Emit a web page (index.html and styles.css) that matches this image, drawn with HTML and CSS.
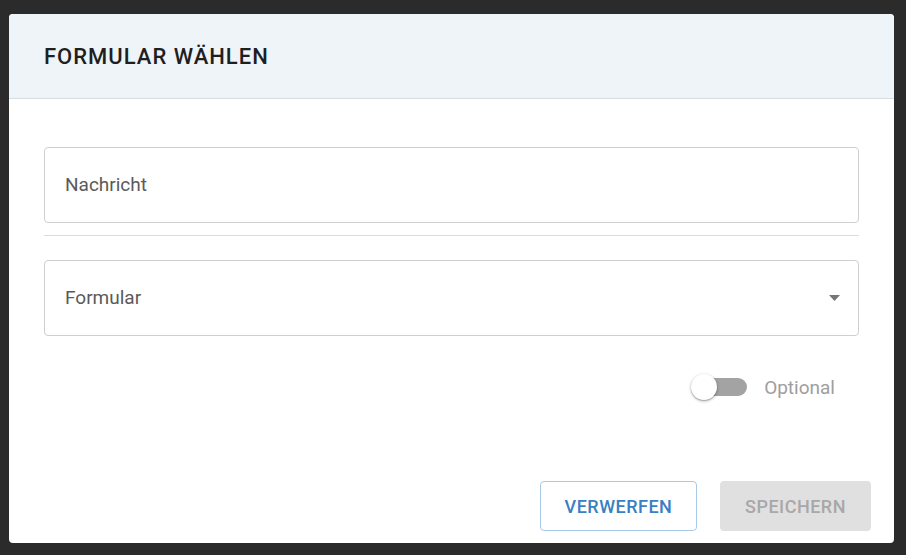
FILE: index.html
```html
<!DOCTYPE html>
<html lang="de">
<head>
<meta charset="utf-8">
<title>Formular wählen</title>
<link rel="stylesheet" href="styles.css">
</head>
<body>
<div class="backdrop">
  <div class="dialog">
    <div class="dialog-header">
      <h2 class="dialog-title">FORMULAR WÄHLEN</h2>
    </div>
    <div class="dialog-body">
      <div class="field">
        <span class="field-label">Nachricht</span>
      </div>
      <div class="divider"></div>
      <div class="field field-select">
        <span class="field-label">Formular</span>
        <svg class="select-arrow" width="11" height="6" viewBox="0 0 11 6"><path d="M0 0 L11 0 L5.5 6 Z" fill="#767676"/></svg>
      </div>
      <div class="toggle-row">
        <span class="switch">
          <span class="switch-track"></span>
          <span class="switch-thumb"></span>
        </span>
        <span class="toggle-label">Optional</span>
      </div>
    </div>
    <div class="dialog-footer">
      <button class="btn btn-outline">VERWERFEN</button>
      <button class="btn btn-disabled">SPEICHERN</button>
    </div>
  </div>
</div>
</body>
</html>
```
FILE: styles.css
```css
html, body {
  margin: 0;
  padding: 0;
  height: 100%;
}
body {
  background: #2b2b2b;
  font-family: Roboto, "Liberation Sans", sans-serif;
}
.backdrop {
  padding: 14px 12px 0 9px;
}
.dialog {
  width: 885px;
  height: 529px;
  background: #ffffff;
  border-radius: 4px;
  display: flex;
  flex-direction: column;
  overflow: hidden;
}
.dialog-header {
  height: 84px;
  background: #eef4f8;
  border-bottom: 1px solid #d6dee4;
  display: flex;
  align-items: center;
  padding: 0 35px;
  flex: none;
}
.dialog-title {
  margin: 0;
  font-size: 22px;
  font-weight: 500;
  color: #1f1f1f;
  letter-spacing: 1px;
}
.dialog-body {
  padding: 48px 35px 0;
  display: flex;
  flex-direction: column;
}
.field {
  height: 74px;
  border: 1px solid #cfcfcf;
  border-radius: 4px;
  display: flex;
  align-items: center;
  padding: 0 20px;
}
.field-label {
  font-size: 19px;
  color: #5a5a5a;
  margin-top: -2px;
}
.field-select {
  justify-content: space-between;
}
.select-arrow {
  display: block;
  margin-right: -2px;
}
.divider {
  height: 1px;
  background: #dcdcdc;
  margin: 12px 0 24px;
}
.toggle-row {
  display: flex;
  justify-content: flex-end;
  align-items: center;
  margin-top: 38px;
  padding-right: 24px;
  gap: 17px;
}
.switch {
  position: relative;
  width: 56px;
  height: 26px;
  display: block;
}
.switch-track {
  position: absolute;
  left: 4px;
  top: 4px;
  width: 52px;
  height: 18px;
  border-radius: 9px;
  background: #a3a3a3;
}
.switch-thumb {
  position: absolute;
  left: 0;
  top: 0;
  width: 26px;
  height: 26px;
  border-radius: 50%;
  background: #ffffff;
  box-shadow: 0 1px 3px rgba(0,0,0,0.35), 0 1px 1px rgba(0,0,0,0.14);
}
.toggle-label {
  font-size: 19px;
  color: #9e9e9e;
}
.dialog-footer {
  margin-top: auto;
  display: flex;
  justify-content: flex-end;
  gap: 23px;
  padding: 0 23px 12px 0;
}
.btn {
  height: 50px;
  border-radius: 4px;
  font-family: Roboto, "Liberation Sans", sans-serif;
  font-size: 18px;
  font-weight: 500;
  letter-spacing: 0.5px;
  padding: 0;
  cursor: pointer;
}
.btn-outline {
  width: 157px;
  background: #ffffff;
  border: 1px solid #a9c9e8;
  color: #3a7fc1;
}
.btn-disabled {
  width: 151px;
  background: #e0e0e0;
  border: none;
  color: #a8a8a8;
}
```
